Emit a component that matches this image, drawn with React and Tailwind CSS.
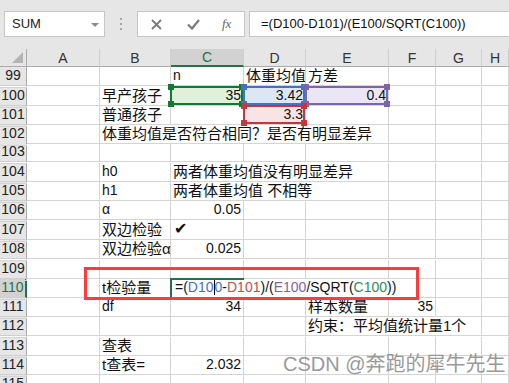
import React from "react";

const COLS =
  "grid grid-cols-[27px_73px_71px_73px_62px_83px_47px_46px_27px]";

function Cell({ span = "", right = false, cjk = false, className = "", children }) {
  return (
    <div
      className={`${span} relative flex items-end whitespace-nowrap border-r border-b border-[#d4d4d4] px-[2px] pb-[1px] leading-[17px] ${
        right ? "justify-end" : ""
      } ${cjk ? "text-[15px]" : "text-[14px]"} ${className}`}
    >
      {children}
    </div>
  );
}

function Row({ n, h, active = false, children }) {
  return (
    <div className={`${COLS} ${h}`}>
      <div
        className={`flex items-end justify-center pb-[1px] text-[14px] leading-[17px] border-b border-[#cfcfcf] ${
          active
            ? "bg-[#d2d2d2] text-[#217346] border-r-2 border-r-[#217346]"
            : "bg-[#e6e6e6] text-[#222] border-r border-r-[#ababab]"
        }`}
      >
        {n}
      </div>
      {children}
    </div>
  );
}

function RangeBox({ border, fill }) {
  const h = `absolute w-[6px] h-[6px] ${fill}`;
  return (
    <div className="absolute -left-px -top-px right-0 bottom-0 z-10 pointer-events-none">
      <div className={`absolute inset-0 border-2 ${border}`} />
      <div className={`${h} -left-[2px] -top-[2px]`} />
      <div className={`${h} -right-[2px] -top-[2px]`} />
      <div className={`${h} -left-[2px] -bottom-[2px]`} />
      <div className={`${h} -right-[2px] -bottom-[2px]`} />
    </div>
  );
}

function E() {
  return <Cell />;
}

export default function App() {
  const font = "font-['Liberation_Sans','Noto_Sans_CJK_SC',sans-serif]";
  return (
    <div
      className={`relative w-[509px] h-[383px] overflow-hidden bg-white text-[#111] ${font}`}
    >
      {/* toolbar */}
      <div className="h-[49px] bg-[#e6e6e6] flex items-start pt-[11px]">
        <div className="ml-[4px] w-[101px] h-[26px] bg-white border border-[#c6c6c6] flex items-center pl-[7px] text-[13px] text-[#222] relative">
          SUM
          <svg className="absolute right-[5px] top-[11px]" width="8" height="5" viewBox="0 0 8 5">
            <path d="M0 0 L8 0 L4 4 Z" fill="#8a8a8a" />
          </svg>
        </div>
        <div className="w-[32px] h-[26px] flex flex-col items-center justify-center gap-[3px]">
          <div className="w-[2px] h-[2px] bg-[#a6a6a6]" />
          <div className="w-[2px] h-[2px] bg-[#a6a6a6]" />
          <div className="w-[2px] h-[2px] bg-[#a6a6a6]" />
        </div>
        <div className="w-[108px] h-[26px] bg-white border border-[#c6c6c6] flex items-center">
          <svg className="ml-[13px]" width="11" height="11" viewBox="0 0 11 11">
            <path d="M1 1 L10 10 M10 1 L1 10" stroke="#7a7a7a" strokeWidth="1.8" />
          </svg>
          <svg className="ml-[25px]" width="13" height="11" viewBox="0 0 13 11">
            <path d="M1 5.5 L5 9.5 L12 1" stroke="#7a7a7a" strokeWidth="2.2" fill="none" />
          </svg>
          <span className="ml-[22px] italic text-[13px] text-[#666] font-['Liberation_Serif',serif]">
            fx
          </span>
        </div>
        <div className="ml-[4px] flex-1 h-[26px] bg-white border border-[#c6c6c6] border-r-0 flex items-center pl-[11px] text-[13px] text-[#111]">
          =(D100-D101)/(E100/SQRT(C100))
        </div>
      </div>

      {/* column headers */}
      <div className={`${COLS} h-[18px] bg-[#e6e6e6] text-[14px] text-[#333] leading-[16px]`}>
        <div className="relative border-r border-b border-[#ababab]">
          <svg className="absolute right-[3px] bottom-[3px]" width="11" height="11" viewBox="0 0 11 11">
            <path d="M11 0 L11 11 L0 11 Z" fill="#b4b4b4" />
          </svg>
        </div>
        {["A", "B", "C", "D", "E", "F", "G", "H", ""].map((c) => (
          <div
            key={c || "x"}
            className={`flex items-center justify-center border-r border-[#cfcfcf] ${
              c === "C"
                ? "bg-[#d2d2d2] text-[#217346] border-b-2 border-b-[#217346]"
                : "border-b border-b-[#ababab]"
            }`}
          >
            {c}
          </div>
        ))}
      </div>

      {/* rows */}
      <Row n="99" h="h-[20px]">
        <E /><E />
        <Cell>n</Cell>
        <Cell cjk className="overflow-hidden">体重均值</Cell>
        <Cell cjk>方差</Cell>
        <E /><E /><E /><E />
      </Row>
      <Row n="100" h="h-[19px]">
        <E />
        <Cell cjk>早产孩子</Cell>
        <Cell right className="bg-[#e2efda]">
          35
          <RangeBox border="border-[#127a2e]" fill="bg-[#127a2e]" />
        </Cell>
        <Cell right className="bg-[#dde7f4]">
          3.42
          <RangeBox border="border-[#4472c4]" fill="bg-[#4472c4]" />
        </Cell>
        <Cell right className="bg-[#ebe6f3]">
          0.4
          <RangeBox border="border-[#8064a8]" fill="bg-[#8064a8]" />
        </Cell>
        <E /><E /><E /><E />
      </Row>
      <Row n="101" h="h-[19px]">
        <E />
        <Cell cjk>普通孩子</Cell>
        <E />
        <Cell right className="bg-[#f8e4e4]">
          3.3
          <RangeBox border="border-[#c0393f]" fill="bg-[#c0393f]" />
        </Cell>
        <E /><E /><E /><E /><E />
      </Row>
      <Row n="102" h="h-[18px]">
        <E />
        <Cell cjk span="col-span-4">体重均值是否符合相同？是否有明显差异</Cell>
        <E /><E /><E /><E />
      </Row>
      <Row n="103" h="h-[20px]">
        <E /><E /><E /><E /><E /><E /><E /><E /><E />
      </Row>
      <Row n="104" h="h-[19px]">
        <E />
        <Cell>h0</Cell>
        <Cell cjk span="col-span-3">两者体重均值没有明显差异</Cell>
        <E /><E /><E /><E />
      </Row>
      <Row n="105" h="h-[19px]">
        <E />
        <Cell>h1</Cell>
        <Cell cjk span="col-span-3">两者体重均值 不相等</Cell>
        <E /><E /><E /><E />
      </Row>
      <Row n="106" h="h-[19px]">
        <E />
        <Cell>α</Cell>
        <Cell right>0.05</Cell>
        <E /><E /><E /><E /><E /><E />
      </Row>
      <Row n="107" h="h-[20px]">
        <E />
        <Cell cjk>双边检验</Cell>
        <Cell className="pl-[3px]">
          <span className="font-['DejaVu_Sans',sans-serif] text-[16px] leading-[18px] font-bold">✔</span>
        </Cell>
        <E /><E /><E /><E /><E /><E />
      </Row>
      <Row n="108" h="h-[20px]">
        <E />
        <Cell cjk>双边检验α</Cell>
        <Cell right>0.025</Cell>
        <E /><E /><E /><E /><E /><E />
      </Row>
      <Row n="109" h="h-[19px]">
        <E /><E /><E /><E /><E /><E /><E /><E /><E />
      </Row>
      <Row n="110" h="h-[19px]" active>
        <E />
        <Cell cjk>t检验量</Cell>
        <Cell span="col-span-4" className="pl-[4px]">
          <div className="absolute -left-px -top-px w-[74px] h-[2px] bg-[#217346] z-10" />
          <div className="absolute -left-px -top-px w-[2px] h-[20px] bg-[#217346] z-10" />
          <span>=(</span>
          <span className="text-[#4472c4]">D10</span>
          <span className="inline-block w-px h-[15px] bg-black mb-[1px]" />
          <span className="text-[#4472c4]">0</span>
          <span>-</span>
          <span className="text-[#c0504d]">D101</span>
          <span>)/(</span>
          <span className="text-[#8064a2]">E100</span>
          <span>/SQRT(</span>
          <span className="text-[#2e8b57]">C100</span>
          <span>))</span>
        </Cell>
        <E /><E /><E />
      </Row>
      <Row n="111" h="h-[19px]">
        <E />
        <Cell>df</Cell>
        <Cell right>34</Cell>
        <E />
        <Cell cjk>样本数量</Cell>
        <Cell right>35</Cell>
        <E /><E /><E />
      </Row>
      <Row n="112" h="h-[20px]">
        <E /><E /><E /><E />
        <Cell cjk span="col-span-3">约束：平均值统计量1个</Cell>
        <E /><E />
      </Row>
      <Row n="113" h="h-[19px]">
        <E />
        <Cell cjk>查表</Cell>
        <E /><E /><E /><E /><E /><E /><E />
      </Row>
      <Row n="114" h="h-[19px]">
        <E />
        <Cell cjk>t查表=</Cell>
        <Cell right>2.032</Cell>
        <E /><E /><E /><E /><E /><E />
      </Row>
      <Row n="115" h="h-[19px]">
        <E /><E /><E /><E /><E /><E /><E /><E /><E />
      </Row>

      {/* annotation */}
      <div className="absolute left-[84px] top-[267px] w-[335px] h-[33px] border-[3px] border-[#ff3b3b] z-20" />
      {/* watermark */}
      <div className="absolute left-[283px] top-[351px] text-[20px] text-[#8f8f8f] opacity-90 whitespace-nowrap z-20 leading-[26px]">
        CSDN @奔跑的犀牛先生
      </div>
    </div>
  );
}
